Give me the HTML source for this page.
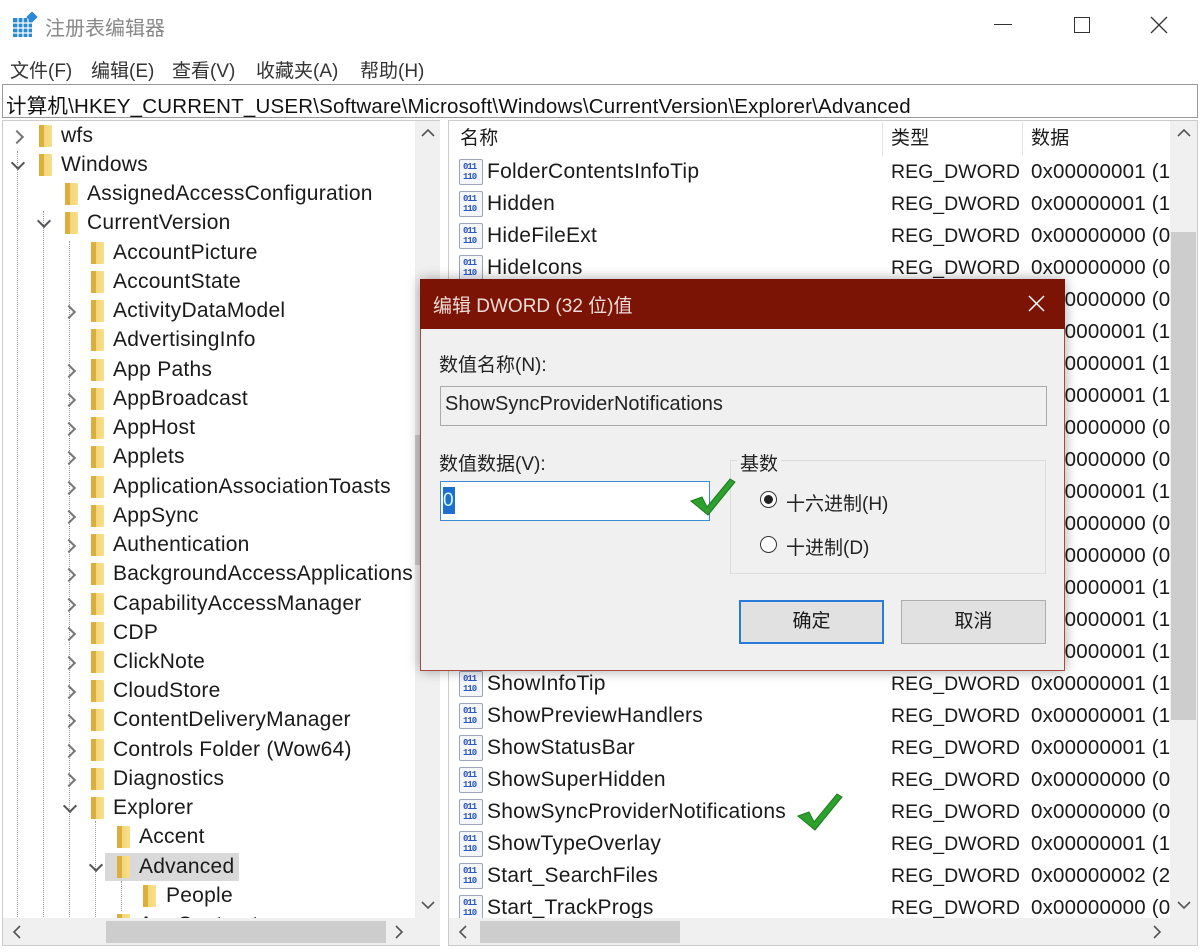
<!DOCTYPE html>
<html><head><meta charset="utf-8">
<style>
*{margin:0;padding:0;box-sizing:border-box}
body{width:1200px;height:952px;background:#fff;font-family:"Liberation Sans","Noto Sans CJK SC",sans-serif;color:#1a1a1a;position:relative;overflow:hidden}
.abs{position:absolute}
.t{position:absolute;height:28px;line-height:28px;font-size:21px;letter-spacing:.25px;white-space:nowrap}
.t.ty{font-size:19.5px;letter-spacing:0}
.t.dv{font-size:20.5px;letter-spacing:.2px}
.fd{position:absolute;width:13px;height:22px;background:linear-gradient(90deg,#e8c25a 0,#f3d67a 40%,#f8df8a 100%);border-radius:1px}
.fd:before{content:"";position:absolute;left:0;top:0;width:5px;height:22px;background:#dcae3e}
.ch{position:absolute;width:20px;height:28px}
.ch:after{content:"";position:absolute;width:8px;height:8px;border-right:2px solid #777;border-top:2px solid #777;left:5px;top:10px;transform:rotate(45deg)}
.ch.d:after{border-top:none;border-bottom:2px solid #555;border-right:2px solid #555;left:6px;top:7px}
.ri{position:absolute;width:24px;height:26px;border:1px solid #9aa6b8;background:#f4f6fa;border-radius:2px}
.ri span{position:absolute;left:3px;font:bold 9px/9px "Liberation Mono",monospace;color:#2a56c6;letter-spacing:-1px}
.dl{position:absolute;border-left:1px dotted #999;width:0}
</style></head><body>
<svg class="abs" style="left:12px;top:12px" width="26" height="26" viewBox="0 0 26 26">
<rect x="1" y="6" width="19" height="19" fill="#2a8ad6"/>
<g stroke="#fff" stroke-width="1.2"><line x1="1" y1="11" x2="20" y2="11"/><line x1="1" y1="16" x2="20" y2="16"/><line x1="1" y1="21" x2="20" y2="21"/><line x1="6" y1="6" x2="6" y2="25"/><line x1="11" y1="6" x2="11" y2="25"/><line x1="16" y1="6" x2="16" y2="25"/></g>
<rect x="16" y="1" width="8" height="8" fill="#2a8ad6" transform="rotate(45 20 5)"/>
</svg>
<div class="abs" style="left:45px;top:12px;font-size:20px;color:#888">注册表编辑器</div>
<div class="abs" style="left:994px;top:24px;width:18px;height:1px;background:#333"></div>
<div class="abs" style="left:1074px;top:17px;width:16px;height:16px;border:1px solid #333"></div>
<svg class="abs" style="left:1150px;top:16px" width="18" height="18"><path d="M1 1L17 17M17 1L1 17" stroke="#333" stroke-width="1.3"/></svg>
<div class="abs" style="left:10px;top:56px;font-size:19px;color:#333">文件(F)</div>
<div class="abs" style="left:91px;top:56px;font-size:19px;color:#333">编辑(E)</div>
<div class="abs" style="left:172px;top:56px;font-size:19px;color:#333">查看(V)</div>
<div class="abs" style="left:256px;top:56px;font-size:19px;color:#333">收藏夹(A)</div>
<div class="abs" style="left:360px;top:56px;font-size:19px;color:#333">帮助(H)</div>
<div class="abs" style="left:2px;top:84px;width:1196px;height:34px;border:1px solid #999;background:#fff"></div>
<div class="abs" style="left:6px;top:89px;font-size:20.5px;letter-spacing:.2px;color:#111">计算机\HKEY_CURRENT_USER\Software\Microsoft\Windows\CurrentVersion\Explorer\Advanced</div>
<div class="abs" style="left:2px;top:120px;width:438px;height:826px;border:1px solid #ccc;overflow:hidden">
<div class="dl" style="left:14px;top:30px;height:800px"></div>
<div class="dl" style="left:40px;top:90px;height:740px"></div>
<div class="dl" style="left:66px;top:120px;height:700px"></div>
<div class="dl" style="left:92px;top:700px;height:120px"></div>
<div class="dl" style="left:118px;top:760px;height:30px"></div>
</div>
<div class="abs" style="left:3px;top:121px;width:412px;height:797px;overflow:hidden">
<div class="ch" style="left:4px;top:1px"></div><div class="fd" style="left:36px;top:4px"></div><div class="t" style="left:58px;top:1px">wfs</div>
<div class="ch d" style="left:4px;top:30px"></div><div class="fd" style="left:36px;top:33px"></div><div class="t" style="left:58px;top:30px">Windows</div>
<div class="fd" style="left:62px;top:62px"></div><div class="t" style="left:84px;top:59px">AssignedAccessConfiguration</div>
<div class="ch d" style="left:30px;top:88px"></div><div class="fd" style="left:62px;top:91px"></div><div class="t" style="left:84px;top:88px">CurrentVersion</div>
<div class="fd" style="left:88px;top:121px"></div><div class="t" style="left:110px;top:118px">AccountPicture</div>
<div class="fd" style="left:88px;top:150px"></div><div class="t" style="left:110px;top:147px">AccountState</div>
<div class="ch" style="left:56px;top:176px"></div><div class="fd" style="left:88px;top:179px"></div><div class="t" style="left:110px;top:176px">ActivityDataModel</div>
<div class="fd" style="left:88px;top:208px"></div><div class="t" style="left:110px;top:205px">AdvertisingInfo</div>
<div class="ch" style="left:56px;top:235px"></div><div class="fd" style="left:88px;top:238px"></div><div class="t" style="left:110px;top:235px">App Paths</div>
<div class="ch" style="left:56px;top:264px"></div><div class="fd" style="left:88px;top:267px"></div><div class="t" style="left:110px;top:264px">AppBroadcast</div>
<div class="ch" style="left:56px;top:293px"></div><div class="fd" style="left:88px;top:296px"></div><div class="t" style="left:110px;top:293px">AppHost</div>
<div class="ch" style="left:56px;top:322px"></div><div class="fd" style="left:88px;top:325px"></div><div class="t" style="left:110px;top:322px">Applets</div>
<div class="ch" style="left:56px;top:352px"></div><div class="fd" style="left:88px;top:355px"></div><div class="t" style="left:110px;top:352px">ApplicationAssociationToasts</div>
<div class="ch" style="left:56px;top:381px"></div><div class="fd" style="left:88px;top:384px"></div><div class="t" style="left:110px;top:381px">AppSync</div>
<div class="ch" style="left:56px;top:410px"></div><div class="fd" style="left:88px;top:413px"></div><div class="t" style="left:110px;top:410px">Authentication</div>
<div class="ch" style="left:56px;top:439px"></div><div class="fd" style="left:88px;top:442px"></div><div class="t" style="left:110px;top:439px">BackgroundAccessApplications</div>
<div class="ch" style="left:56px;top:469px"></div><div class="fd" style="left:88px;top:472px"></div><div class="t" style="left:110px;top:469px">CapabilityAccessManager</div>
<div class="ch" style="left:56px;top:498px"></div><div class="fd" style="left:88px;top:501px"></div><div class="t" style="left:110px;top:498px">CDP</div>
<div class="ch" style="left:56px;top:527px"></div><div class="fd" style="left:88px;top:530px"></div><div class="t" style="left:110px;top:527px">ClickNote</div>
<div class="ch" style="left:56px;top:556px"></div><div class="fd" style="left:88px;top:559px"></div><div class="t" style="left:110px;top:556px">CloudStore</div>
<div class="ch" style="left:56px;top:585px"></div><div class="fd" style="left:88px;top:588px"></div><div class="t" style="left:110px;top:585px">ContentDeliveryManager</div>
<div class="ch" style="left:56px;top:615px"></div><div class="fd" style="left:88px;top:618px"></div><div class="t" style="left:110px;top:615px">Controls Folder (Wow64)</div>
<div class="ch" style="left:56px;top:644px"></div><div class="fd" style="left:88px;top:647px"></div><div class="t" style="left:110px;top:644px">Diagnostics</div>
<div class="ch d" style="left:56px;top:673px"></div><div class="fd" style="left:88px;top:676px"></div><div class="t" style="left:110px;top:673px">Explorer</div>
<div class="fd" style="left:114px;top:705px"></div><div class="t" style="left:136px;top:702px">Accent</div>
<div class="abs" style="left:102px;top:732px;width:134px;height:28px;background:#d9d9d9"></div>
<div class="ch d" style="left:82px;top:732px"></div><div class="fd" style="left:114px;top:735px"></div><div class="t" style="left:136px;top:732px">Advanced</div>
<div class="fd" style="left:140px;top:764px"></div><div class="t" style="left:163px;top:761px">People</div>
<div class="ch" style="left:82px;top:790px"></div><div class="fd" style="left:114px;top:793px"></div><div class="t" style="left:136px;top:790px">AppContract</div>
</div>
<div class="abs" style="left:415px;top:121px;width:25px;height:797px;background:#f0f0f0"></div>
<div class="abs" style="left:415px;top:435px;width:25px;height:130px;background:#cdcdcd"></div>
<svg class="abs" style="left:420px;top:128px" width="16" height="10"><path d="M2 8L8 2L14 8" fill="none" stroke="#555" stroke-width="1.6"/></svg>
<svg class="abs" style="left:420px;top:900px" width="16" height="10"><path d="M2 2L8 8L14 2" fill="none" stroke="#555" stroke-width="1.6"/></svg>
<div class="abs" style="left:3px;top:918px;width:437px;height:27px;background:#f0f0f0"></div>
<div class="abs" style="left:106px;top:921px;width:280px;height:22px;background:#cdcdcd"></div>
<svg class="abs" style="left:12px;top:924px" width="10" height="16"><path d="M8 2L2 8L8 14" fill="none" stroke="#555" stroke-width="1.6"/></svg>
<svg class="abs" style="left:394px;top:924px" width="10" height="16"><path d="M2 2L8 8L2 14" fill="none" stroke="#555" stroke-width="1.6"/></svg>
<div class="abs" style="left:448px;top:120px;width:750px;height:826px;border:1px solid #ccc"></div>
<div class="abs" style="left:882px;top:122px;width:1px;height:34px;background:#e5e5e5"></div>
<div class="abs" style="left:1022px;top:122px;width:1px;height:34px;background:#e5e5e5"></div>
<div class="t" style="left:460px;top:125px;font-size:19px">名称</div>
<div class="t" style="left:891px;top:125px;font-size:19px">类型</div>
<div class="t" style="left:1031px;top:125px;font-size:19px">数据</div>
<div class="abs" style="left:452px;top:156px;width:718px;height:762px;overflow:hidden">
<div class="ri" style="left:7px;top:3px"><span style="top:3px">011</span><span style="top:13px">110</span></div><div class="t" style="left:35px;top:2px">FolderContentsInfoTip</div><div class="t ty" style="left:439px;top:2px">REG_DWORD</div><div class="t dv" style="left:579px;top:2px">0x00000001 (1)</div>
<div class="ri" style="left:7px;top:35px"><span style="top:3px">011</span><span style="top:13px">110</span></div><div class="t" style="left:35px;top:34px">Hidden</div><div class="t ty" style="left:439px;top:34px">REG_DWORD</div><div class="t dv" style="left:579px;top:34px">0x00000001 (1)</div>
<div class="ri" style="left:7px;top:67px"><span style="top:3px">011</span><span style="top:13px">110</span></div><div class="t" style="left:35px;top:66px">HideFileExt</div><div class="t ty" style="left:439px;top:66px">REG_DWORD</div><div class="t dv" style="left:579px;top:66px">0x00000000 (0)</div>
<div class="ri" style="left:7px;top:99px"><span style="top:3px">011</span><span style="top:13px">110</span></div><div class="t" style="left:35px;top:98px">HideIcons</div><div class="t ty" style="left:439px;top:98px">REG_DWORD</div><div class="t dv" style="left:579px;top:98px">0x00000000 (0)</div>
<div class="t dv" style="left:579px;top:130px">0x00000000 (0)</div>
<div class="t dv" style="left:579px;top:162px">0x00000001 (1)</div>
<div class="t dv" style="left:579px;top:194px">0x00000001 (1)</div>
<div class="t dv" style="left:579px;top:226px">0x00000001 (1)</div>
<div class="t dv" style="left:579px;top:258px">0x00000000 (0)</div>
<div class="t dv" style="left:579px;top:290px">0x00000000 (0)</div>
<div class="t dv" style="left:579px;top:322px">0x00000001 (1)</div>
<div class="t dv" style="left:579px;top:354px">0x00000000 (0)</div>
<div class="t dv" style="left:579px;top:386px">0x00000000 (0)</div>
<div class="t dv" style="left:579px;top:418px">0x00000001 (1)</div>
<div class="t dv" style="left:579px;top:450px">0x00000001 (1)</div>
<div class="t dv" style="left:579px;top:482px">0x00000001 (1)</div>
<div class="ri" style="left:7px;top:515px"><span style="top:3px">011</span><span style="top:13px">110</span></div><div class="t" style="left:35px;top:514px">ShowInfoTip</div><div class="t ty" style="left:439px;top:514px">REG_DWORD</div><div class="t dv" style="left:579px;top:514px">0x00000001 (1)</div>
<div class="ri" style="left:7px;top:547px"><span style="top:3px">011</span><span style="top:13px">110</span></div><div class="t" style="left:35px;top:546px">ShowPreviewHandlers</div><div class="t ty" style="left:439px;top:546px">REG_DWORD</div><div class="t dv" style="left:579px;top:546px">0x00000001 (1)</div>
<div class="ri" style="left:7px;top:579px"><span style="top:3px">011</span><span style="top:13px">110</span></div><div class="t" style="left:35px;top:578px">ShowStatusBar</div><div class="t ty" style="left:439px;top:578px">REG_DWORD</div><div class="t dv" style="left:579px;top:578px">0x00000001 (1)</div>
<div class="ri" style="left:7px;top:611px"><span style="top:3px">011</span><span style="top:13px">110</span></div><div class="t" style="left:35px;top:610px">ShowSuperHidden</div><div class="t ty" style="left:439px;top:610px">REG_DWORD</div><div class="t dv" style="left:579px;top:610px">0x00000000 (0)</div>
<div class="ri" style="left:7px;top:643px"><span style="top:3px">011</span><span style="top:13px">110</span></div><div class="t" style="left:35px;top:642px">ShowSyncProviderNotifications</div><div class="t ty" style="left:439px;top:642px">REG_DWORD</div><div class="t dv" style="left:579px;top:642px">0x00000000 (0)</div>
<div class="ri" style="left:7px;top:675px"><span style="top:3px">011</span><span style="top:13px">110</span></div><div class="t" style="left:35px;top:674px">ShowTypeOverlay</div><div class="t ty" style="left:439px;top:674px">REG_DWORD</div><div class="t dv" style="left:579px;top:674px">0x00000001 (1)</div>
<div class="ri" style="left:7px;top:707px"><span style="top:3px">011</span><span style="top:13px">110</span></div><div class="t" style="left:35px;top:706px">Start_SearchFiles</div><div class="t ty" style="left:439px;top:706px">REG_DWORD</div><div class="t dv" style="left:579px;top:706px">0x00000002 (2)</div>
<div class="ri" style="left:7px;top:739px"><span style="top:3px">011</span><span style="top:13px">110</span></div><div class="t" style="left:35px;top:738px">Start_TrackProgs</div><div class="t ty" style="left:439px;top:738px">REG_DWORD</div><div class="t dv" style="left:579px;top:738px">0x00000000 (0)</div>
</div>
<div class="abs" style="left:1170px;top:121px;width:27px;height:797px;background:#f0f0f0"></div>
<div class="abs" style="left:1171px;top:232px;width:25px;height:488px;background:#cdcdcd"></div>
<svg class="abs" style="left:1176px;top:128px" width="16" height="10"><path d="M2 8L8 2L14 8" fill="none" stroke="#555" stroke-width="1.6"/></svg>
<svg class="abs" style="left:1176px;top:900px" width="16" height="10"><path d="M2 2L8 8L14 2" fill="none" stroke="#555" stroke-width="1.6"/></svg>
<div class="abs" style="left:449px;top:918px;width:748px;height:27px;background:#f0f0f0"></div>
<div class="abs" style="left:480px;top:921px;width:200px;height:22px;background:#cdcdcd"></div>
<svg class="abs" style="left:458px;top:924px" width="10" height="16"><path d="M8 2L2 8L8 14" fill="none" stroke="#555" stroke-width="1.6"/></svg>
<svg class="abs" style="left:1152px;top:924px" width="10" height="16"><path d="M2 2L8 8L2 14" fill="none" stroke="#555" stroke-width="1.6"/></svg>
<svg class="abs" style="left:795px;top:790px" width="50" height="45" viewBox="0 0 50 45"><path d="M3 26 L14 22 L19 32 L42 4 L47 7 L20 40 Z" fill="#2da12d" stroke="#1e7a1e" stroke-width="1"/></svg>
<div class="abs" style="left:420px;top:279px;width:645px;height:392px;background:#f0f0f0;border:1px solid #a84a3e;box-shadow:0 0 12px rgba(0,0,0,.35)"></div>
<div class="abs" style="left:420px;top:279px;width:645px;height:50px;background:#7b1405"></div>
<div class="abs" style="left:433px;top:291px;font-size:19px;color:#f0dcd8">编辑 DWORD (32 位)值</div>
<svg class="abs" style="left:1028px;top:295px" width="17" height="17"><path d="M1 1L16 16M16 1L1 16" stroke="#fff" stroke-width="1.5"/></svg>
<div class="abs" style="left:439px;top:350px;font-size:19px;color:#222">数值名称(N):</div>
<div class="abs" style="left:440px;top:386px;width:607px;height:40px;border:1px solid #aaa;background:#f0f0f0"></div>
<div class="abs" style="left:445px;top:393px;font-size:20px;color:#222">ShowSyncProviderNotifications</div>
<div class="abs" style="left:439px;top:449px;font-size:19px;color:#222">数值数据(V):</div>
<div class="abs" style="left:440px;top:481px;width:270px;height:40px;border:1px solid #3b8ad6;background:#fff"></div>
<div class="abs" style="left:443px;top:487px;width:12px;height:27px;background:#1e6fd0;color:#cfe;font-size:19px;line-height:27px">0</div>
<div class="abs" style="left:730px;top:460px;width:316px;height:114px;border:1px solid #dcdcdc"></div>
<div class="abs" style="left:737px;top:449px;font-size:19px;color:#222;background:#f0f0f0;padding:0 3px">基数</div>
<div class="abs" style="left:760px;top:491px;width:17px;height:17px;border:1px solid #333;border-radius:50%;background:#fff"></div>
<div class="abs" style="left:764px;top:495px;width:9px;height:9px;border-radius:50%;background:#222"></div>
<div class="abs" style="left:786px;top:489px;font-size:19px;color:#222">十六进制(H)</div>
<div class="abs" style="left:760px;top:536px;width:17px;height:17px;border:1px solid #333;border-radius:50%;background:#fff"></div>
<div class="abs" style="left:786px;top:533px;font-size:19px;color:#222">十进制(D)</div>
<div class="abs" style="left:739px;top:600px;width:145px;height:44px;border:2px solid #2a7ad8;background:#e1e1e1;text-align:center;line-height:40px;font-size:19px">确定</div>
<div class="abs" style="left:901px;top:600px;width:145px;height:44px;border:1px solid #adadad;background:#e1e1e1;text-align:center;line-height:42px;font-size:19px">取消</div>
<svg class="abs" style="left:688px;top:475px" width="50" height="45" viewBox="0 0 50 45"><path d="M3 26 L14 22 L19 32 L42 4 L47 7 L20 40 Z" fill="#2da12d" stroke="#1e7a1e" stroke-width="1"/></svg>
</body></html>
